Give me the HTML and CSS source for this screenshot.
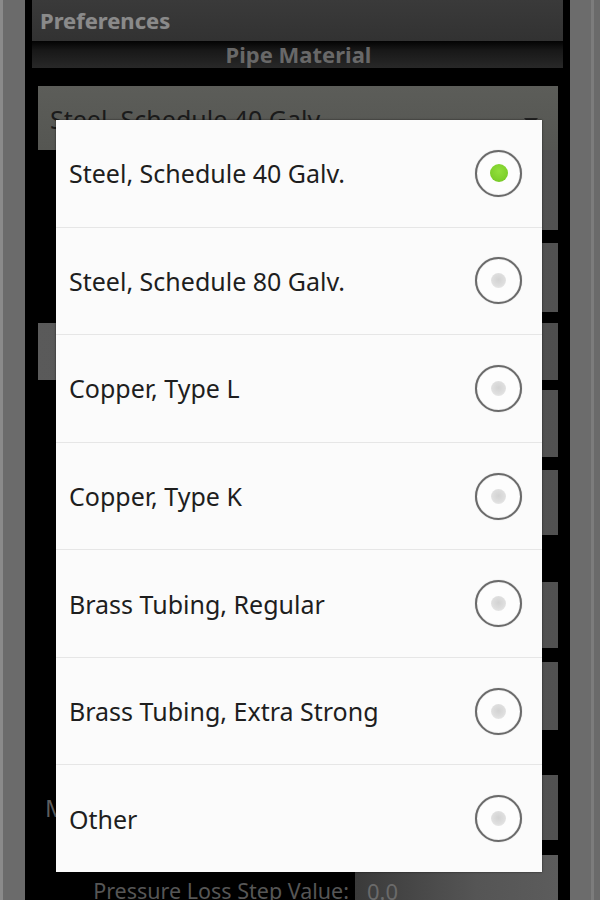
FILE: index.html
```html
<!DOCTYPE html>
<html>
<head>
<meta charset="utf-8">
<link rel="stylesheet" href="styles.css">
</head>
<body>
<div class="device">
  <div class="bezel-left"></div>
  <main class="screen">
    <div class="titlebar">Preferences</div>
    <div class="section-header">Pipe Material</div>
    <div class="form">
      <div class="spinner"><span class="spinner-text">Steel, Schedule 40 Galv.</span><span class="spinner-arrow"></span></div>
      <div class="row r1"><span class="field"></span></div>
      <div class="row r2"><span class="field"></span></div>
      <div class="row r3 full"><span class="field wide"></span></div>
      <div class="row r4"><span class="field"></span></div>
      <div class="row r5"><span class="field"></span></div>
      <div class="row r6"><span class="field"></span></div>
      <div class="row r7"><span class="field"></span></div>
      <div class="row r8"><span class="label left">M</span><span class="field"></span></div>
      <div class="row r9"><span class="label right">Pressure Loss Step Value:</span><span class="field input">0.0</span></div>
    </div>
  </main>
  <div class="bezel-right"></div>

  <div class="dialog">
    <div class="option"><span class="option-text">Steel, Schedule 40 Galv.</span><span class="radio checked"><span class="dot"></span></span></div>
    <div class="option"><span class="option-text">Steel, Schedule 80 Galv.</span><span class="radio"><span class="dot"></span></span></div>
    <div class="option"><span class="option-text">Copper, Type L</span><span class="radio"><span class="dot"></span></span></div>
    <div class="option"><span class="option-text">Copper, Type K</span><span class="radio"><span class="dot"></span></span></div>
    <div class="option"><span class="option-text">Brass Tubing, Regular</span><span class="radio"><span class="dot"></span></span></div>
    <div class="option"><span class="option-text">Brass Tubing, Extra Strong</span><span class="radio"><span class="dot"></span></span></div>
    <div class="option"><span class="option-text">Other</span><span class="radio"><span class="dot"></span></span></div>
  </div>
</div>
</body>
</html>
```

FILE: styles.css
```css
* { box-sizing: border-box; }
html, body { margin: 0; padding: 0; background: #000; }
body { font-family: "Noto Sans", "Open Sans", sans-serif; }

.device {
  position: relative;
  width: 600px;
  height: 900px;
  overflow: hidden;
  display: flex;
}

.bezel-left {
  width: 25px;
  flex: none;
  background: linear-gradient(90deg, #8a8a8a 0, #8a8a8a 3px, #6b6b6b 3px, #6b6b6b 100%);
}
.bezel-right {
  width: 30px;
  flex: none;
  background: linear-gradient(90deg, #6c6c6c 0, #6c6c6c 21px, #7c7c7c 21px, #7c7c7c 24px, #6a6a6a 24px);
}

.screen {
  flex: 1;
  background: #000;
  padding: 0 7px;
  display: flex;
  flex-direction: column;
}

.titlebar {
  height: 41px;
  flex: none;
  background: linear-gradient(#3a3a3a, #323232);
  color: #8a8a8a;
  font-weight: 700;
  font-size: 22px;
  line-height: 40px;
  padding-left: 8px;
  text-shadow: 0 0 1px #555;
}

.section-header {
  height: 27px;
  flex: none;
  overflow: hidden;
  background: linear-gradient(#030303 0, #181818 35%, #282828 100%);
  color: #686868;
  font-weight: 700;
  font-size: 22px;
  line-height: 16px;
  text-align: center;
  padding-left: 2px;
  padding-top: 5px;
}

.form {
  padding: 18px 5px 0 6px;
  display: flex;
  flex-direction: column;
}

.spinner {
  height: 64px;
  background: linear-gradient(#5c5d59, #555652);
  display: flex;
  align-items: center;
  justify-content: space-between;
  padding: 0 20px 0 12px;
  color: #1b1b1b;
  font-size: 25px;
  padding-top: 2px;
}
.spinner-arrow {
  width: 0; height: 0;
  border-left: 7px solid transparent;
  border-right: 7px solid transparent;
  border-top: 8px solid #222;
  margin-top: 6px;
}

.row {
  display: flex;
  align-items: stretch;
  justify-content: flex-end;
}
.field {
  width: 240px;
  background: linear-gradient(90deg, #707070 0, #707070 2px, #575757 2px, #515151 100%);
}
.field.wide { width: 100%; background: linear-gradient(90deg, #5a5a5a, #4e4e4e); }

.r1 { height: 80px; }
.r2 { height: 69px; margin-top: 13px; }
.r3 { height: 57px; margin-top: 11px; }
.r4 { height: 67px; margin-top: 10px; }
.r5 { height: 65px; margin-top: 13px; }
.r6 { height: 66px; margin-top: 47px; }
.r7 { height: 68px; margin-top: 14px; }
.r8 { height: 65px; margin-top: 45px; justify-content: space-between; align-items: stretch; }
.r9 { height: 65px; margin-top: 15px; justify-content: flex-end; }

.label {
  color: #5e5e5e;
  font-size: 22px;
  display: flex;
  align-items: center;
}
.label.left { padding-left: 7px; font-size: 24px; }
.label.right { padding-right: 6px; padding-top: 6px; color: #565656; font-size: 21.5px; }

.field.input {
  width: 203px;
  background: linear-gradient(90deg, #3a3a3a, #555 60%, #5c5c5c);
  color: #6a6a6a;
  font-size: 22px;
  padding-left: 12px;
  display: flex;
  align-items: center;
  padding-top: 6px;
}

.dialog {
  position: absolute;
  left: 56px;
  top: 120px;
  width: 486px;
  height: 752px;
  background: #fbfbfb;
  display: flex;
  flex-direction: column;
  box-shadow: 0 0 2px rgba(0,0,0,0.6);
}
.option {
  flex: 1;
  display: flex;
  align-items: center;
  justify-content: space-between;
  padding: 0 20px 0 13px;
  border-bottom: 1px solid #e6e6e6;
}
.option:last-child { border-bottom: none; }
.option-text {
  font-size: 25px;
  color: #1e1e1e;
}
.radio {
  width: 47px;
  height: 47px;
  border-radius: 50%;
  border: 2px solid #6a6a6a;
  box-shadow: 0 0 1px #aaa, inset 0 0 1px #bbb;
  display: flex;
  align-items: center;
  justify-content: center;
  background: #fdfdfd;
}
.dot {
  width: 15px;
  height: 15px;
  border-radius: 50%;
  background: radial-gradient(circle at 50% 45%, #d2d2d2 0, #dedede 55%, #f0f0f0 100%);
}
.radio.checked .dot {
  width: 18px;
  height: 18px;
  background: radial-gradient(circle at 50% 40%, #92e03c 0, #7fd02c 60%, #6cbf22 100%);
}
```
